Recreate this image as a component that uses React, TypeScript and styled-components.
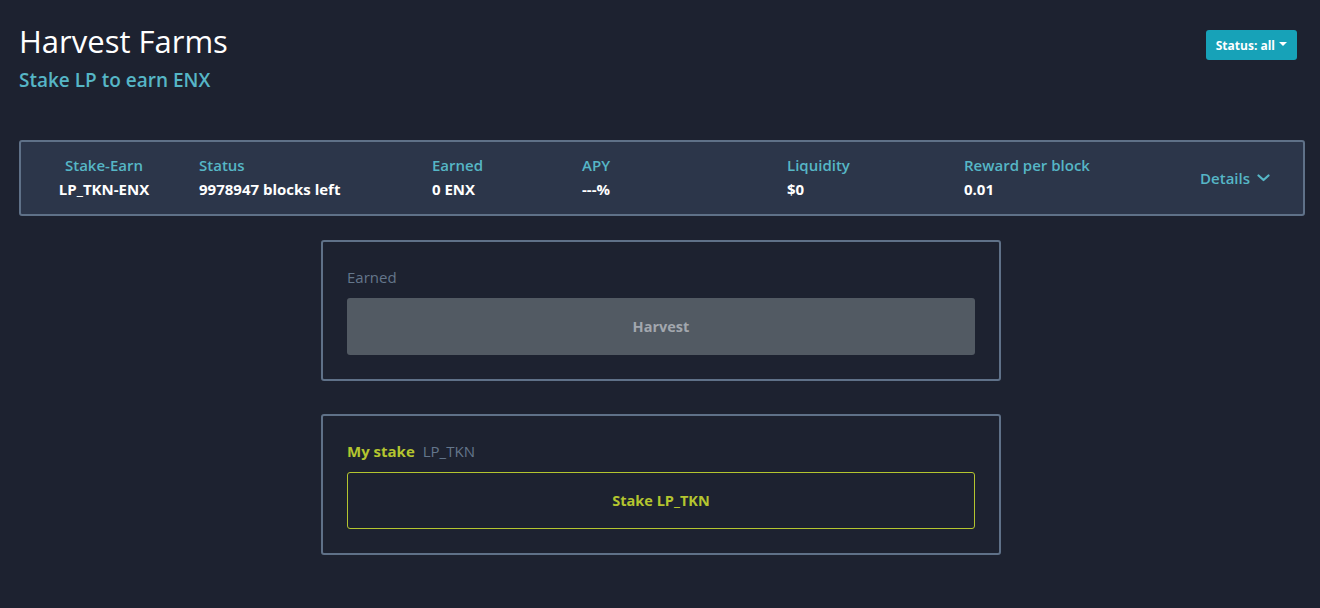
import React from "react";
import styled, { createGlobalStyle } from "styled-components";

const Global = createGlobalStyle`
  html, body { margin: 0; padding: 0; background: #1d2230; }
  body { font-family: "Open Sans", "Noto Sans", sans-serif; color: #fff; }
  * { box-sizing: border-box; }
`;

const Page = styled.div`
  padding: 20px 15px 40px 19px;
  display: flex;
  flex-direction: column;
`;

const Header = styled.div`
  display: flex;
  justify-content: space-between;
  align-items: flex-start;
`;

const TitleBlock = styled.div`
  display: flex;
  flex-direction: column;
`;

const Title = styled.h1`
  margin: 0;
  font-size: 31px;
  line-height: 42px;
  font-weight: 400;
  color: #ffffff;
`;

const Subtitle = styled.div`
  margin-top: 5px;
  font-size: 19px;
  line-height: 26px;
  font-weight: 600;
  color: #56b6c6;
`;

const StatusButton = styled.button`
  margin-top: 10px;
  margin-right: 8px;
  background: #17a2b8;
  border: none;
  border-radius: 3px;
  color: #fff;
  font-family: inherit;
  font-size: 12px;
  font-weight: 700;
  height: 30px;
  padding: 0 10px;
  display: flex;
  align-items: center;
  gap: 4px;
`;

const Caret = styled.span`
  width: 0;
  height: 0;
  border-left: 4px solid transparent;
  border-right: 4px solid transparent;
  border-top: 4px solid #fff;
  margin-top: -2px;
`;

const FarmRow = styled.div`
  margin-top: 47px;
  background: #2c364a;
  border: 2px solid #5f7188;
  border-radius: 3px;
  height: 76px;
  display: grid;
  grid-template-columns: 161px 233px 150px 205px 177px 1fr auto;
  align-items: center;
  padding-left: 17px;
  padding-right: 33px;
`;

const Cell = styled.div<{ $center?: boolean }>`
  display: flex;
  flex-direction: column;
  gap: 4px;
  margin-top: -2px;
  text-align: ${(p) => (p.$center ? "center" : "left")};
  padding-right: ${(p) => (p.$center ? "29px" : "0")};
`;

const CellHead = styled.div`
  font-size: 15px;
  line-height: 20px;
  font-weight: 600;
  color: #56b6c6;
`;

const CellValue = styled.div`
  font-size: 15px;
  line-height: 20px;
  font-weight: 700;
  color: #ffffff;
`;

const Details = styled.div`
  display: flex;
  align-items: center;
  gap: 7px;
  font-size: 15px;
  font-weight: 600;
  color: #56b6c6;
`;

const Cards = styled.div`
  margin-top: 24px;
  display: flex;
  flex-direction: column;
  align-items: center;
  gap: 33px;
  padding-right: 2px;
`;

const Card = styled.div`
  width: 680px;
  border: 2px solid #5f7188;
  border-radius: 3px;
  padding: 24px;
  display: flex;
  flex-direction: column;
  gap: 10px;
`;

const Label = styled.div`
  font-size: 15px;
  line-height: 22px;
  display: flex;
  gap: 8px;
`;

const Muted = styled.span`
  color: #64768b;
  font-weight: 400;
`;

const Accent = styled.span`
  color: #b4c52f;
  font-weight: 700;
`;

const ActionButton = styled.button<{ $variant: "disabled" | "outline" }>`
  width: 100%;
  height: 57px;
  border-radius: 3px;
  font-family: inherit;
  font-size: 14.5px;
  font-weight: 700;
  background: ${(p) => (p.$variant === "disabled" ? "#525a63" : "transparent")};
  color: ${(p) => (p.$variant === "disabled" ? "#a2a7ae" : "#b4c52f")};
  border: ${(p) => (p.$variant === "disabled" ? "none" : "1px solid #b4c52f")};
`;

const columns = [
  { head: "Stake-Earn", value: "LP_TKN-ENX", center: true },
  { head: "Status", value: "9978947 blocks left" },
  { head: "Earned", value: "0 ENX" },
  { head: "APY", value: "---%" },
  { head: "Liquidity", value: "$0" },
  { head: "Reward per block", value: "0.01" },
];

export default function App() {
  return (
    <>
      <Global />
      <Page>
        <Header>
          <TitleBlock>
            <Title>Harvest Farms</Title>
            <Subtitle>Stake LP to earn ENX</Subtitle>
          </TitleBlock>
          <StatusButton>
            Status: all <Caret />
          </StatusButton>
        </Header>
        <FarmRow>
          {columns.map((c) => (
            <Cell key={c.head} $center={c.center}>
              <CellHead>{c.head}</CellHead>
              <CellValue>{c.value}</CellValue>
            </Cell>
          ))}
          <Details>
            Details
            <svg width="13" height="8" viewBox="0 0 13 8" fill="none">
              <path d="M1.5 1.5 L6.5 6 L11.5 1.5" stroke="#56b6c6" strokeWidth="2.2" strokeLinecap="round" strokeLinejoin="round" />
            </svg>
          </Details>
        </FarmRow>
        <Cards>
          <Card>
            <Label>
              <Muted>Earned</Muted>
            </Label>
            <ActionButton $variant="disabled">Harvest</ActionButton>
          </Card>
          <Card>
            <Label>
              <Accent>My stake</Accent>
              <Muted>LP_TKN</Muted>
            </Label>
            <ActionButton $variant="outline">Stake LP_TKN</ActionButton>
          </Card>
        </Cards>
      </Page>
    </>
  );
}
